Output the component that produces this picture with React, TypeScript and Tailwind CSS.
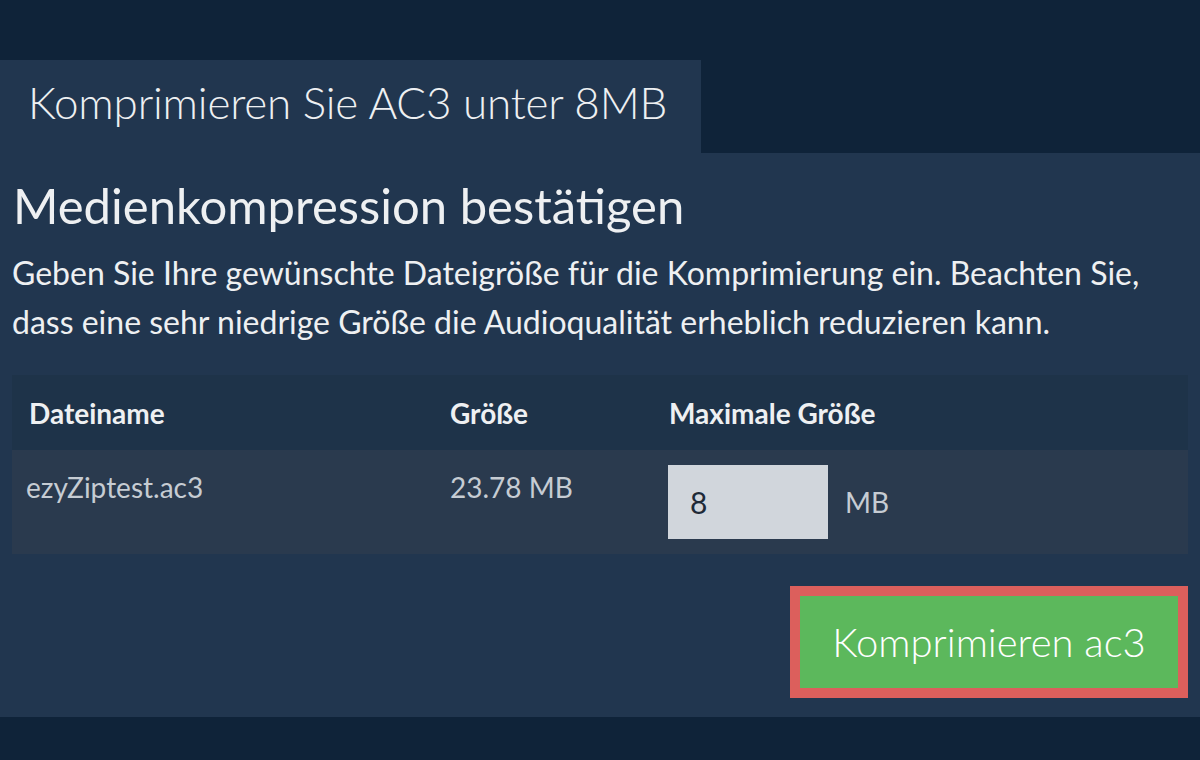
import React, { useState } from "react";

export default function App() {
  const [maxSize, setMaxSize] = useState("8");

  return (
    <div className="min-h-screen bg-[#0f2339] pt-[60px] text-[#eef0f2] font-['Lato',sans-serif]">
      {/* TAB */}
      <div className="w-[701px] h-[93px] bg-[#21364f] pl-[28px] pb-[10px] flex items-center">
        <h1 className="text-[44px] font-light leading-none tracking-[-0.2px]">Komprimieren Sie AC3 unter 8MB</h1>
      </div>

      {/* PANEL */}
      <section className="bg-[#21364f] px-3 pt-[26px] pb-[19px]">
        <h2 className="text-[49px] leading-[53px] pl-[1px]">Medienkompression bestätigen</h2>
        <p className="mt-[16px] text-[32px] leading-[49px]">
          Geben Sie Ihre gewünschte Dateigröße für die Komprimierung ein. Beachten Sie, dass eine sehr niedrige Größe die Audioqualität erheblich reduzieren kann.
        </p>

        <table className="mt-[29px] w-full border-collapse">
          <thead>
            <tr className="bg-[#1e3349] h-[75px] text-left text-[28px] font-bold">
              <th className="w-[421px] pl-[17px]">Dateiname</th>
              <th className="w-[219px] pl-[17px]">Größe</th>
              <th className="pl-[17px]">Maximale Größe</th>
            </tr>
          </thead>
          <tbody>
            <tr className="bg-[#2a3a4e] h-[104px] align-top text-[28px] text-[#c6ccd3]">
              <td className="pl-[14px] pt-[16px]">ezyZiptest.ac3</td>
              <td className="pl-[17px] pt-[16px]">23.78 MB</td>
              <td className="pl-[16px] pt-[15px]">
                <div className="flex items-center gap-[17px]">
                  <input
                    value={maxSize}
                    onChange={(e) => setMaxSize(e.target.value)}
                    className="w-[160px] h-[74px] bg-[#d1d6dc] pl-[22px] text-[30px] text-[#1e2a38] outline-none"
                  />
                  <span>MB</span>
                </div>
              </td>
            </tr>
          </tbody>
        </table>

        <div className="mt-[32px] flex justify-end">
          <button className="w-[398px] h-[112px] border-[10px] border-[#dc5f5c] bg-[#5cb85c] text-[40px] font-light text-white">
            Komprimieren ac3
          </button>
        </div>
      </section>
    </div>
  );
}
